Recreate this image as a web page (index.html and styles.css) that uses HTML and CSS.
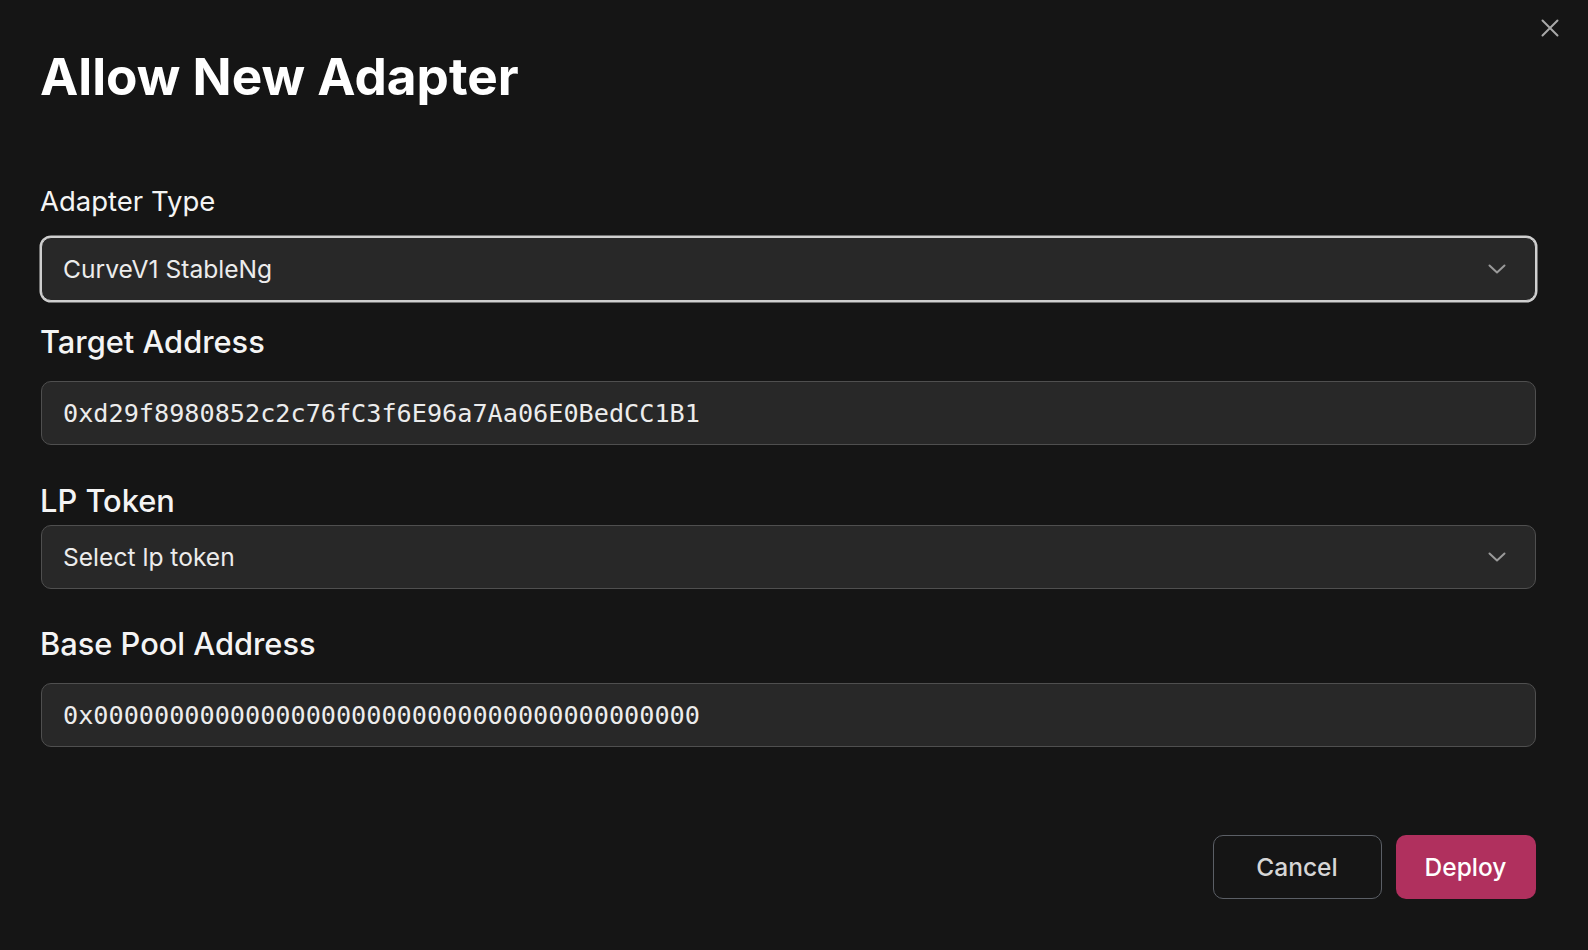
FILE: index.html
```html
<!DOCTYPE html>
<html lang="en">
<head>
<meta charset="utf-8">
<title>Allow New Adapter</title>
<link rel="stylesheet" href="styles.css">
</head>
<body>
<div class="modal">
  <button class="close" type="button" aria-label="Close">
    <svg width="18" height="18" viewBox="0 0 18 18"><path d="M1.5 1.5 L16.5 16.5 M16.5 1.5 L1.5 16.5" stroke="currentColor" stroke-width="2" stroke-linecap="round" fill="none"/></svg>
  </button>
  <h1 class="title">Allow New Adapter</h1>
  <div class="form">
    <div class="field field-type">
      <label class="label label-light">Adapter Type</label>
      <div class="control select focused">
        <span class="value">CurveV1 StableNg</span>
        <svg class="chev" width="18" height="10" viewBox="0 0 18 10"><path d="M1.5 1.5 L9 8.5 L16.5 1.5" stroke="currentColor" stroke-width="2" stroke-linecap="round" stroke-linejoin="round" fill="none"/></svg>
      </div>
    </div>
    <div class="field field-target">
      <label class="label">Target Address</label>
      <div class="control input"><span class="mono">0xd29f8980852c2c76fC3f6E96a7Aa06E0BedCC1B1</span></div>
    </div>
    <div class="field field-lp">
      <label class="label">LP Token</label>
      <div class="control select">
        <span class="value">Select lp token</span>
        <svg class="chev" width="18" height="10" viewBox="0 0 18 10"><path d="M1.5 1.5 L9 8.5 L16.5 1.5" stroke="currentColor" stroke-width="2" stroke-linecap="round" stroke-linejoin="round" fill="none"/></svg>
      </div>
    </div>
    <div class="field field-base">
      <label class="label">Base Pool Address</label>
      <div class="control input"><span class="mono">0x0000000000000000000000000000000000000000</span></div>
    </div>
  </div>
  <div class="actions">
    <button class="btn btn-cancel" type="button">Cancel</button>
    <button class="btn btn-deploy" type="button">Deploy</button>
  </div>
</div>
</body>
</html>
```
FILE: styles.css
```css
html, body {
  margin: 0;
  padding: 0;
  background: #151515;
  height: 100%;
}
body {
  font-family: Inter, "Noto Sans", sans-serif;
  color: #ffffff;
}
.modal {
  position: relative;
  padding: 46px 52.5px 0 41px;
}
.close {
  position: absolute;
  top: 19px;
  left: 1541px;
  width: 18px;
  height: 18px;
  padding: 0;
  border: 0;
  background: transparent;
  color: #a8a8a8;
  display: flex;
}
.title {
  margin: 0 0 0 -1px;
  font-size: 51.3px;
  line-height: 60px;
  font-weight: 700;
  color: #ffffff;
}
.form {
  display: flex;
  flex-direction: column;
}
.field {
  display: flex;
  flex-direction: column;
}
.label {
  font-size: 30.8px;
  line-height: 36px;
  font-weight: 500;
  color: #f4f4f4;
  margin-left: -1px;
}
.label-light {
  font-size: 27.5px;
  line-height: 34px;
  font-weight: 400;
}
.field-type { margin-top: 78px; }
.field-type .label { margin-bottom: 19px; }
.field-target { margin-top: 23px; }
.field-target .label { margin-bottom: 21px; }
.field-lp { margin-top: 38px; }
.field-lp .label { margin-bottom: 6px; }
.field-base { margin-top: 37px; }
.field-base .label { margin-bottom: 21px; }

.control {
  box-sizing: border-box;
  height: 64px;
  border: 1px solid #4f4f4f;
  border-radius: 10px;
  background: #282828;
  display: flex;
  align-items: center;
  padding: 0 21px 0 21px;
}
.select { justify-content: space-between; }
.focused {
  border-color: #cfcfcf;
  box-shadow: 0 0 0 1.5px #cfcfcf;
}
.value {
  font-size: 24.6px;
  color: #ececec;
  font-weight: 400;
}
.chev {
  color: #9a9a9a;
  margin-right: 8px;
}
.mono {
  font-family: "DejaVu Sans Mono", "Liberation Mono", monospace;
  font-size: 25.2px;
  color: #ececec;
}
.actions {
  display: flex;
  justify-content: flex-end;
  gap: 14px;
  margin-top: 88px;
}
.btn {
  box-sizing: border-box;
  height: 64px;
  border-radius: 10px;
  font-family: Inter, "Noto Sans", sans-serif;
  font-size: 24.5px;
  font-weight: 500;
  padding: 0;
}
.btn-cancel {
  width: 169px;
  background: transparent;
  border: 1px solid #5b5f66;
  color: #d6d6d6;
}
.btn-deploy {
  width: 140px;
  background: #b0305e;
  border: 0;
  color: #ffffff;
}
```
